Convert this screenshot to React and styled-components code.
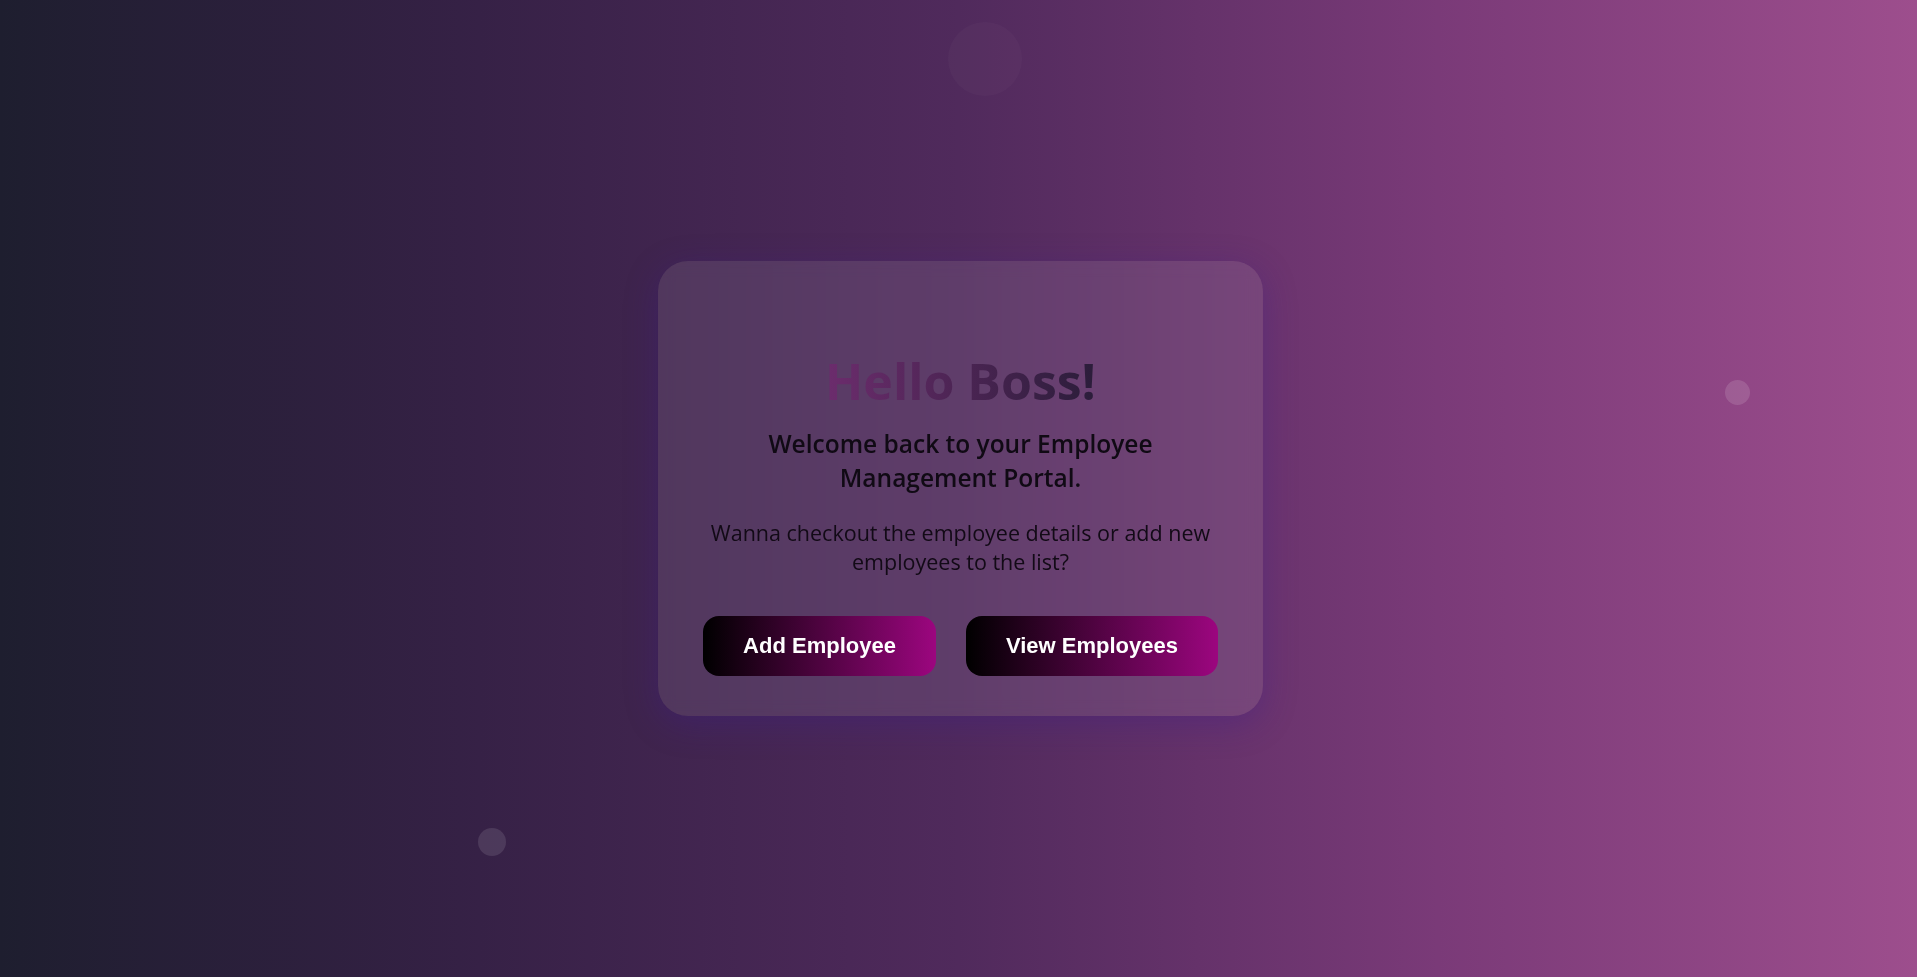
import React from 'react'
import styled, { createGlobalStyle } from 'styled-components'

const GlobalStyle = createGlobalStyle`
  * {
    box-sizing: border-box;
  }

  html, body, #root {
    margin: 0;
    padding: 0;
    height: 100%;
  }

  body {
    font-family: "Open Sans", "Noto Sans", sans-serif;
    overflow: hidden;
  }
`

const Page = styled.main`
  position: relative;
  width: 100%;
  height: 100vh;
  display: flex;
  align-items: center;
  justify-content: center;
  padding-left: 4px;
  background: linear-gradient(to right, #1e1e2f 0%, #362146 25%, #502a5c 50%, #7a3a78 75%, #9d4e8d 100%);
  overflow: hidden;
`

const Bubble = styled.span`
  position: absolute;
  left: ${({ x }) => `${x}px`};
  top: ${({ y }) => `${y}px`};
  width: ${({ size }) => `${size}px`};
  height: ${({ size }) => `${size}px`};
  border-radius: 50%;
  background: ${({ alpha }) => `rgba(255, 255, 255, ${alpha})`};
`

const Card = styled.section`
  width: 605px;
  padding: 91px 40px 40px;
  display: flex;
  flex-direction: column;
  align-items: center;
  text-align: center;
  border-radius: 30px;
  background: rgba(255, 255, 255, 0.09);
  box-shadow: 0 8px 32px rgba(60, 30, 140, 0.35);
  backdrop-filter: blur(8px);
`

const Title = styled.h1`
  margin: 0;
  font-size: 50px;
  line-height: 58px;
  font-weight: 700;
  background: linear-gradient(to right, #6c2c6d, #2b1d3a);
  -webkit-background-clip: text;
  background-clip: text;
  color: transparent;
`

const Subtitle = styled.h2`
  margin: 17px 0 0;
  max-width: 460px;
  font-size: 24.5px;
  line-height: 34px;
  font-weight: 600;
  color: #100a14;
`

const Text = styled.p`
  margin: 23px 0 0;
  font-size: 21.5px;
  line-height: 29px;
  font-weight: 400;
  color: #120a16;
`

const Actions = styled.div`
  margin-top: 40px;
  display: flex;
  gap: 30px;
`

const Button = styled.button`
  height: 60px;
  padding: 0 ${({ padX }) => `${padX}px`};
  border: none;
  border-radius: 16px;
  background: linear-gradient(to right, #000000, #9c067f);
  color: #fff;
  font-family: "Liberation Sans", Arial, sans-serif;
  font-size: 22px;
  font-weight: 700;
  cursor: pointer;
`

export default function App() {
  return (
    <Page>
      <GlobalStyle />
      <Bubble x={948} y={22} size={74} alpha={0.025} />
      <Bubble x={1725} y={380} size={25} alpha={0.13} />
      <Bubble x={478} y={828} size={28} alpha={0.11} />
      <Card>
        <Title>Hello Boss!</Title>
        <Subtitle>Welcome back to your Employee Management Portal.</Subtitle>
        <Text>Wanna checkout the employee details or add new employees to the list?</Text>
        <Actions>
          <Button padX={40}>Add Employee</Button>
          <Button padX={40}>View Employees</Button>
        </Actions>
      </Card>
    </Page>
  )
}
